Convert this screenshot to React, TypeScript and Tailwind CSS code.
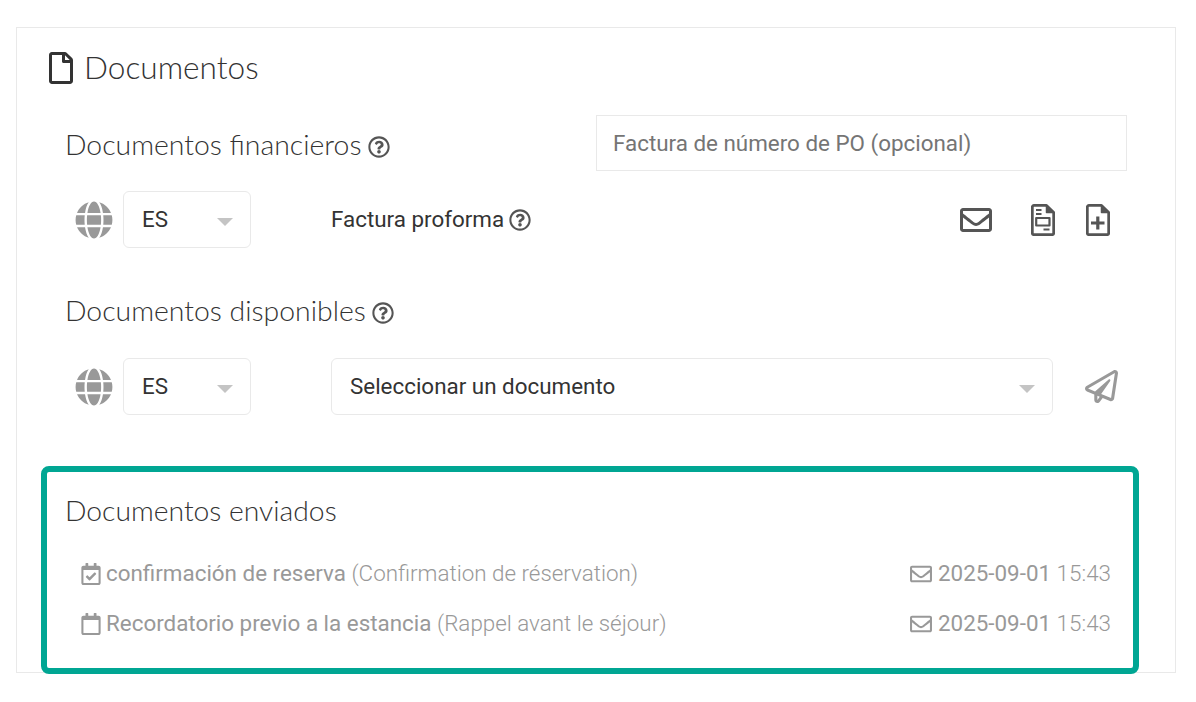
import React from 'react'
import {
  FaGlobe,
  FaRegCalendar,
  FaRegCalendarCheck,
  FaRegEnvelope,
  FaRegFile,
  FaRegPaperPlane,
  FaRegQuestionCircle,
} from 'react-icons/fa'

const SENT_DOCS = [
  { name: 'confirmación de reserva', original: '(Confirmation de réservation)', checked: true },
  { name: 'Recordatorio previo a la estancia', original: '(Rappel avant le séjour)', checked: false },
]

function FileOutline({ children }: { children: React.ReactNode }) {
  return (
    <svg width="24" height="32" viewBox="0 0 24 32" fill="none" stroke="#555" strokeWidth="2.800" strokeLinejoin="round">
      <path d="M3 1.400h12.500l7.200 7.200v20.400a1.700 1.700 0 0 1-1.700 1.700h-18a1.700 1.700 0 0 1-1.700-1.700v-25.900a1.700 1.700 0 0 1 1.700-1.700z" />
      <path d="M15.500 1.400v7.200h7.200" fill="#555" strokeWidth="1.500" />
      {children}
    </svg>
  )
}

function FileInvoice() {
  return (
    <FileOutline>
      <path d="M5 6h5.500M5 10h5.500M12.500 25.500h6" strokeWidth="2.200" />
      <rect x="5.200" y="14" width="13.300" height="7.500" strokeWidth="2.200" />
    </FileOutline>
  )
}

function FilePlus() {
  return (
    <FileOutline>
      <path d="M11.800 12.500v13M5 19h13.500" strokeWidth="3.200" />
    </FileOutline>
  )
}

function LangSelect() {
  return (
    <div className="flex items-center gap-[10px]">
      <FaGlobe className="text-[38px] text-[#999]" />
      <div className="flex h-[57px] w-[128px] items-center justify-between rounded-md border border-[#e9e9e9] pl-[18px] pr-[17px] text-[22.400px] text-[#333]">
        <span>ES</span>
        <span className="mt-1 h-0 w-0 border-x-[8px] border-t-[8px] border-x-transparent border-t-[#c4c4c4]" />
      </div>
    </div>
  )
}

function Heading({ children }: { children: React.ReactNode }) {
  return (
    <div className="-ml-px flex items-center gap-[6px]">
      <h3 className="font-['Lato',sans-serif] text-[28.400px] font-light text-[#333]">{children}</h3>
      <FaRegQuestionCircle className="mt-1 text-[22px] text-[#555]" />
    </div>
  )
}

export default function App() {
  return (
    <div className="min-h-[702px] bg-white pl-4 pr-5 pt-[27px] font-['Roboto',sans-serif]">
      <div className="h-[646px] border border-[#e9e9e9] pt-4">
        <div className="flex items-center gap-[7px] pl-[28px]">
          <FaRegFile className="text-[32px] text-[#333]" />
          <h2 className="font-['Lato',sans-serif] text-[31.600px] font-light text-[#333]">Documentos</h2>
        </div>

        <div className="pl-[49px] pr-[48px]">
          <div className="flex items-start justify-between">
            <div className="mt-[32px]">
              <Heading>Documentos financieros</Heading>
            </div>
            <input
              readOnly
              placeholder="Factura de número de PO (opcional)"
              className="mt-[24px] h-[56px] w-[531px] border border-[#e9e9e9] px-4 text-[22.400px] outline-none placeholder:text-[#757575]"
            />
          </div>

          <div className="mt-[20px] flex items-center pl-[9px]">
            <LangSelect />
            <div className="ml-[80px] flex items-center gap-[5px] text-[22.400px] text-[#333]">
              <span>Factura proforma</span>
              <FaRegQuestionCircle className="text-[22px] text-[#555]" />
            </div>
            <div className="ml-auto flex items-center pr-[17px] text-[#555]">
              <FaRegEnvelope className="text-[32px]" />
              <div className="ml-[39px]">
                <FileInvoice />
              </div>
              <div className="ml-[31px]">
                <FilePlus />
              </div>
            </div>
          </div>

          <div className="mt-[41px]">
            <Heading>Documentos disponibles</Heading>
          </div>

          <div className="mt-[26px] flex items-center pl-[9px]">
            <LangSelect />
            <div className="ml-[80px] flex h-[57px] w-[722px] items-center justify-between rounded-md border border-[#e9e9e9] pl-[18px] pr-[17px] text-[22.400px] text-[#333]">
              <span>Seleccionar un documento</span>
              <span className="mt-1 h-0 w-0 border-x-[8px] border-t-[8px] border-x-transparent border-t-[#c4c4c4]" />
            </div>
            <FaRegPaperPlane className="ml-[32px] text-[33px] text-[#999]" />
          </div>
        </div>

        <section className="ml-[24px] mt-[51px] h-[208px] w-[1098px] rounded-lg border-[6px] border-[#00a693] bg-white px-[18px] pt-[17px]">
          <h3 className="font-['Lato',sans-serif] text-[28.300px] font-light text-[#333]">Documentos enviados</h3>
          <ul className="mt-[26px] flex flex-col gap-[17px] pl-[15px] pr-[4px] text-[22.400px] text-[#999]">
            {SENT_DOCS.map((doc) => (
              <li key={doc.name} className="flex h-[33px] items-center justify-between">
                <div className="flex items-center gap-1">
                  {doc.checked ? <FaRegCalendarCheck className="text-[22px]" /> : <FaRegCalendar className="text-[22px]" />}
                  <span>
                    {doc.name} <span className="font-light">{doc.original}</span>
                  </span>
                </div>
                <div className="flex items-center gap-[6px]">
                  <FaRegEnvelope className="text-[22px]" />
                  <span>
                    2025-09-01 <span className="font-light">15:43</span>
                  </span>
                </div>
              </li>
            ))}
          </ul>
        </section>
      </div>
    </div>
  )
}
